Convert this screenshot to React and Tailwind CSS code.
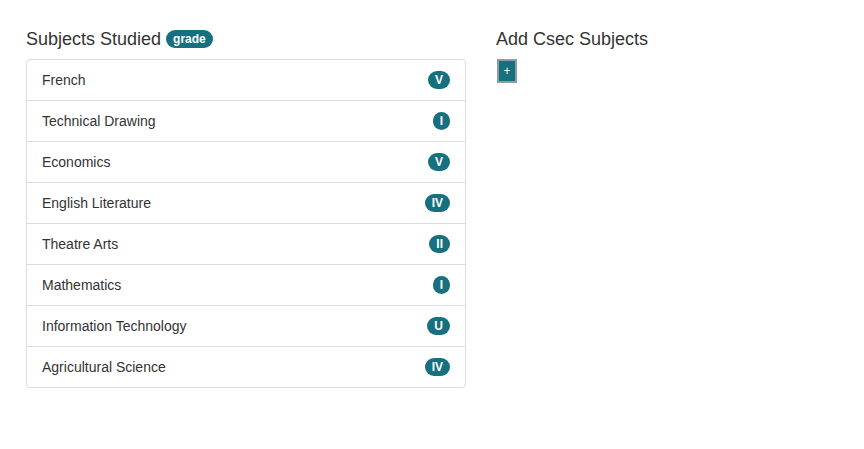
import React from 'react';

const subjects = [
  { name: 'French', grade: 'V' },
  { name: 'Technical Drawing', grade: 'I' },
  { name: 'Economics', grade: 'V' },
  { name: 'English Literature', grade: 'IV' },
  { name: 'Theatre Arts', grade: 'II' },
  { name: 'Mathematics', grade: 'I' },
  { name: 'Information Technology', grade: 'U' },
  { name: 'Agricultural Science', grade: 'IV' },
];

export default function App() {
  return (
    <div className="min-h-[449px] bg-white text-[#333] font-['Liberation_Sans',Arial,sans-serif] text-[14px] leading-[20px]">
      <div className="flex gap-[30px] pl-[26px] pt-[28px]">
        {/* left column */}
        <div className="w-[440px]">
          <h3 className="flex items-center h-[22px] text-[18px] leading-[22px] mb-[9px]">
            Subjects Studied
            <span className="ml-[5px] rounded-full bg-[#16707f] text-white text-[12px] font-bold leading-none px-[7px] py-[3px]">grade</span>
          </h3>
          <ul className="rounded-[4px] border border-[#ddd]">
            {subjects.map((s, i) => (
              <li
                key={s.name}
                className={`flex items-center justify-between px-[15px] py-[10px] ${i > 0 ? 'border-t border-[#ddd]' : ''}`}
              >
                <span>{s.name}</span>
                <span className="min-w-[10px] rounded-full bg-[#16707f] text-white text-[12px] font-bold leading-none px-[7px] py-[3px] text-center">
                  {s.grade}
                </span>
              </li>
            ))}
          </ul>
        </div>

        {/* right column */}
        <div>
          <h3 className="h-[22px] text-[18px] leading-[22px] mb-[9px]">Add Csec Subjects</h3>
          <button className="ml-[1px] w-[20px] h-[24px] bg-[#16707f] border-[2px] border-[#8c9ea2] text-white text-[12px] leading-none flex items-center justify-center">
            +
          </button>
        </div>
      </div>
    </div>
  );
}
